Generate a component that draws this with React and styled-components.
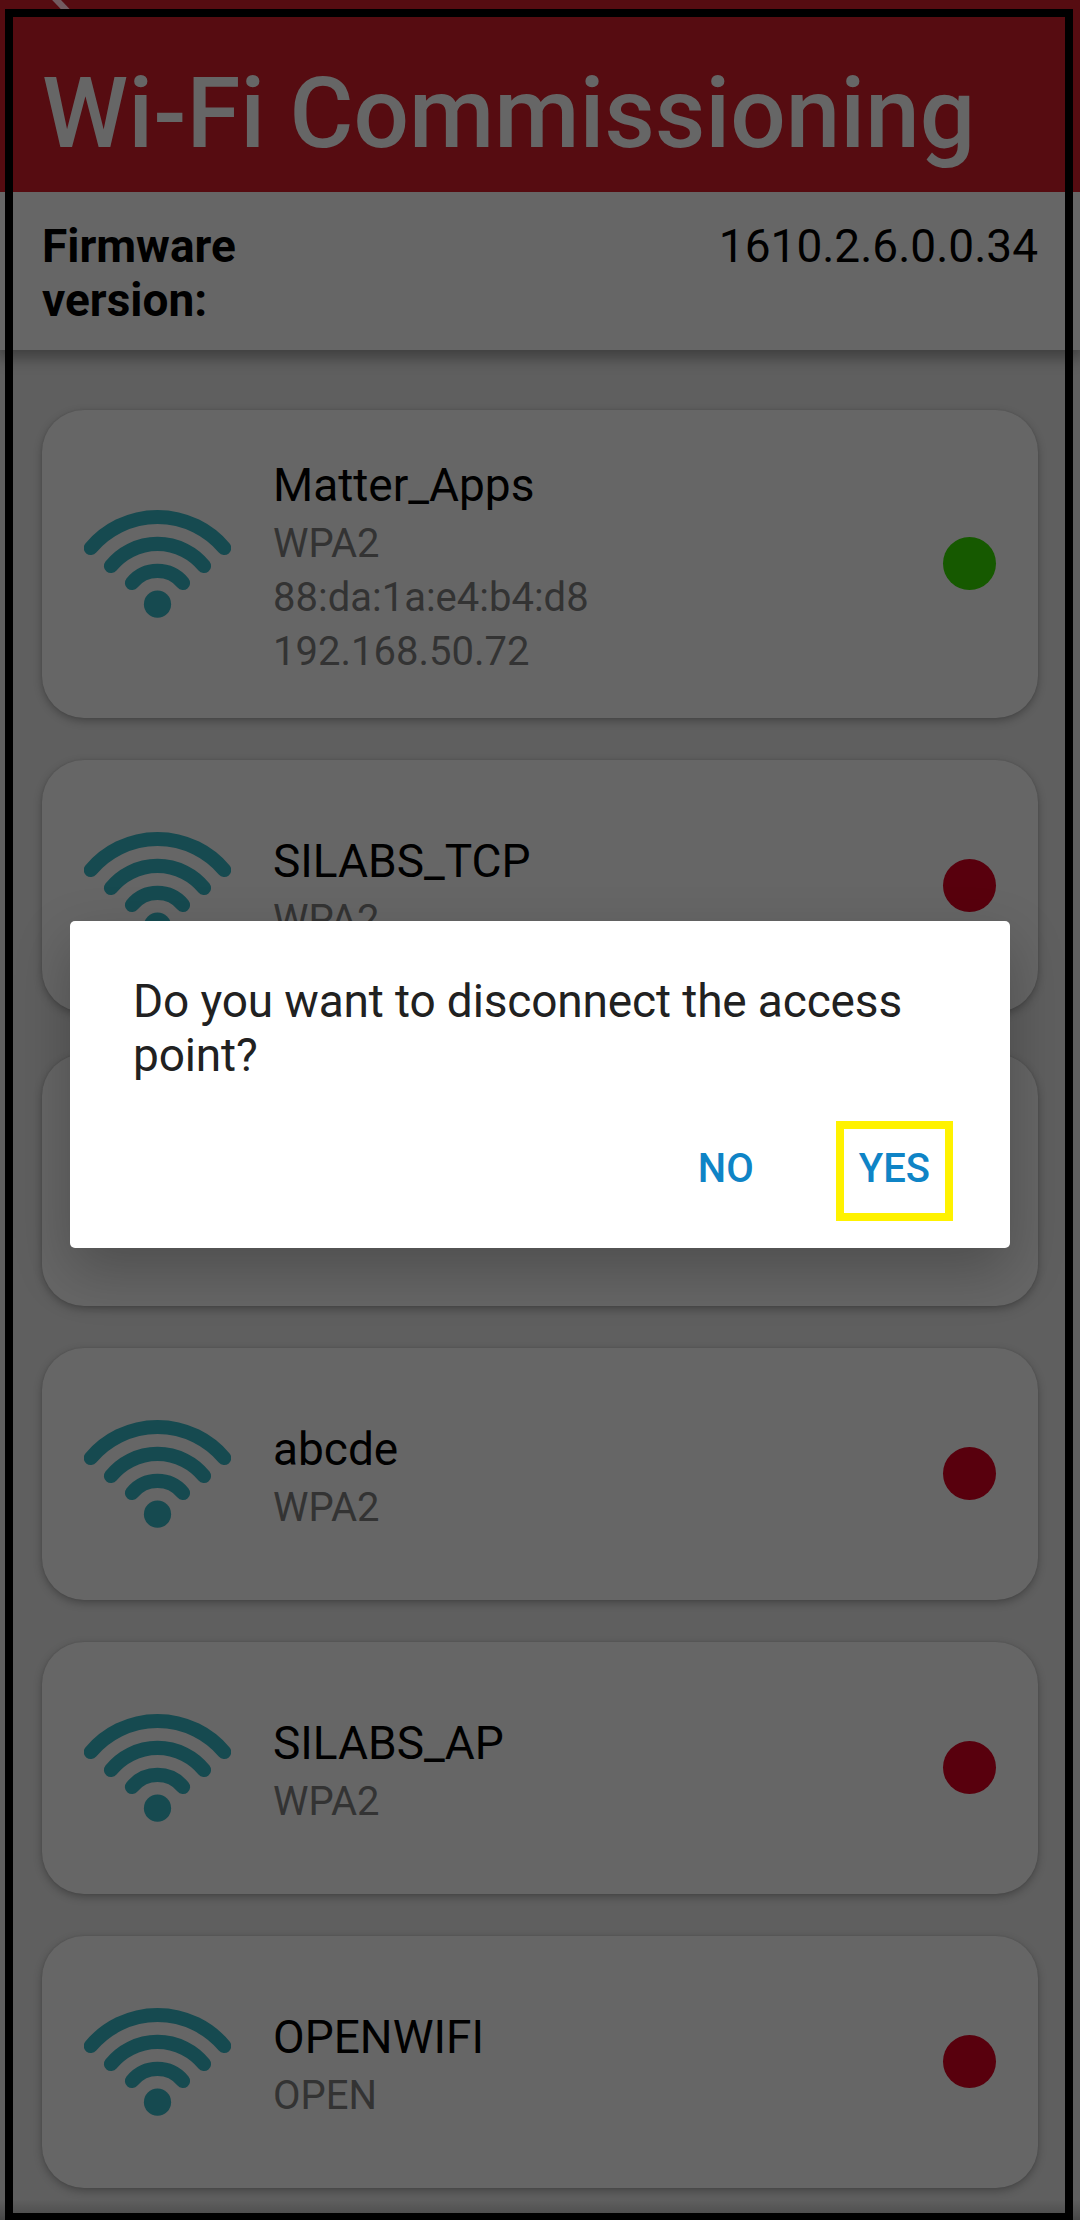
import React from "react";
import styled, { createGlobalStyle } from "styled-components";

const GlobalStyle = createGlobalStyle`
  * { box-sizing: border-box; }
  body { margin: 0; background: #5f5f5f; font-family: Roboto, "Liberation Sans", sans-serif; }
`;

const Screen = styled.div`
  position: relative;
  width: 1080px;
  height: 2220px;
  overflow: hidden;
  display: flex;
  flex-direction: column;
  background: #5f5f5f;
`;

const Header = styled.header`
  position: relative;
  flex: none;
  height: 192px;
  padding: 57px 42px 0;
  background: #560c11;
`;

const BackArrow = styled.svg`
  position: absolute;
  left: 42px;
  top: 0;
  width: 40px;
  height: 12px;
`;

const Title = styled.h1`
  margin: 0;
  font-size: 97.9px;
  line-height: 114px;
  font-weight: 500;
  color: #666;
  white-space: nowrap;
`;

const FirmwareBar = styled.section`
  flex: none;
  height: 158px;
  padding: 27px 42px 0;
  display: flex;
  justify-content: space-between;
  background: #666;
  box-shadow: 0 6px 14px 2px rgba(0, 0, 0, 0.34);
  font-size: 46px;
  line-height: 54px;
  color: #000;
`;

const FirmwareLabel = styled.span`
  width: 260px;
  font-weight: 700;
`;

const FirmwareValue = styled.span``;

const NetworkList = styled.main`
  flex: 1;
  display: flex;
  flex-direction: column;
  gap: 42px;
  padding: 60px 42px 32px;
  background: linear-gradient(to top, rgba(0, 0, 0, 0.25), transparent 20px);
`;

const Card = styled.article`
  flex: none;
  display: flex;
  align-items: center;
  gap: 42px;
  height: ${(p) => (p.$tall ? 308 : 252)}px;
  padding: 0 42px;
  border-radius: 42px;
  background: #666;
  box-shadow: 0 3px 8px rgba(0, 0, 0, 0.28), 0 0 2px rgba(0, 0, 0, 0.1);
`;

const WifiIcon = styled.svg`
  flex: none;
  width: 147px;
  height: 109px;
  margin-bottom: 1px;
`;

const Details = styled.div`
  flex: 1;
  padding-top: 5px;
`;

const Name = styled.div`
  margin-bottom: 1px;
  font-size: 46px;
  line-height: 54px;
  color: #000;
`;

const Meta = styled.div`
  margin-top: 7px;
  font-size: 40px;
  line-height: 47px;
  color: #333;

  ${Name} + & {
    margin-top: 8px;
  }
`;

const Status = styled.span`
  flex: none;
  width: 53px;
  height: 53px;
  margin-bottom: 1px;
  border-radius: 50%;
  background: ${(p) => (p.$connected ? "#165900" : "#58000d")};
`;

const Frame = styled.div`
  position: absolute;
  left: 5px;
  top: 9px;
  width: 1068px;
  height: 2212px;
  border: 8px solid #000;
`;

const Dialog = styled.div`
  position: absolute;
  left: 70px;
  top: 921px;
  width: 940px;
  height: 327px;
  padding: 53px 57px 27px 63px;
  display: flex;
  flex-direction: column;
  justify-content: space-between;
  border-radius: 5px;
  background: #fff;
  box-shadow: 0 22px 56px rgba(0, 0, 0, 0.24);
`;

const Message = styled.p`
  margin: 0;
  font-size: 46px;
  line-height: 54px;
  letter-spacing: -0.14px;
  color: #212121;
`;

const Actions = styled.div`
  display: flex;
  justify-content: flex-end;
  gap: 59px;
`;

const Action = styled.button`
  height: 100px;
  padding: 0 15px 6px;
  border: 8px solid ${(p) => (p.$highlighted ? "#fff200" : "transparent")};
  background: none;
  font: 500 40px/47px Roboto, "Liberation Sans", sans-serif;
  color: #0f84c6;
`;

const networks = [
  { name: "Matter_Apps", meta: ["WPA2", "88:da:1a:e4:b4:d8", "192.168.50.72"], connected: true },
  { name: "SILABS_TCP", meta: ["WPA2"] },
  { name: "", meta: [] },
  { name: "abcde", meta: ["WPA2"] },
  { name: "SILABS_AP", meta: ["WPA2"] },
  { name: "OPENWIFI", meta: ["OPEN"] },
];

function Wifi() {
  return (
    <WifiIcon viewBox="0 0 147 109" fill="none" stroke="#164a50" strokeWidth="14.2" strokeLinecap="round">
      <path d="M6.8 39A87.3 87.3 0 0 1 140.2 39" />
      <path d="M27 57A60 60 0 0 1 120 57" />
      <path d="M48 74A33 33 0 0 1 99 74" />
      <circle cx="73.5" cy="95.2" r="13.6" fill="#164a50" stroke="none" />
    </WifiIcon>
  );
}

export default function App() {
  return (
    <Screen>
      <GlobalStyle />
      <Header>
        <BackArrow viewBox="0 0 40 12">
          <path d="M11.7 -3L26 12" stroke="#725b60" strokeWidth="6.4" />
        </BackArrow>
        <Title>Wi-Fi Commissioning</Title>
      </Header>
      <FirmwareBar>
        <FirmwareLabel>Firmware version:</FirmwareLabel>
        <FirmwareValue>1610.2.6.0.0.34</FirmwareValue>
      </FirmwareBar>
      <NetworkList>
        {networks.map((n, i) => (
          <Card key={i} $tall={n.meta.length > 1}>
            <Wifi />
            <Details>
              <Name>{n.name}</Name>
              {n.meta.map((m) => (
                <Meta key={m}>{m}</Meta>
              ))}
            </Details>
            <Status $connected={n.connected} />
          </Card>
        ))}
      </NetworkList>
      <Dialog role="dialog">
        <Message>Do you want to disconnect the access point?</Message>
        <Actions>
          <Action>NO</Action>
          <Action $highlighted>YES</Action>
        </Actions>
      </Dialog>
      <Frame />
    </Screen>
  );
}
